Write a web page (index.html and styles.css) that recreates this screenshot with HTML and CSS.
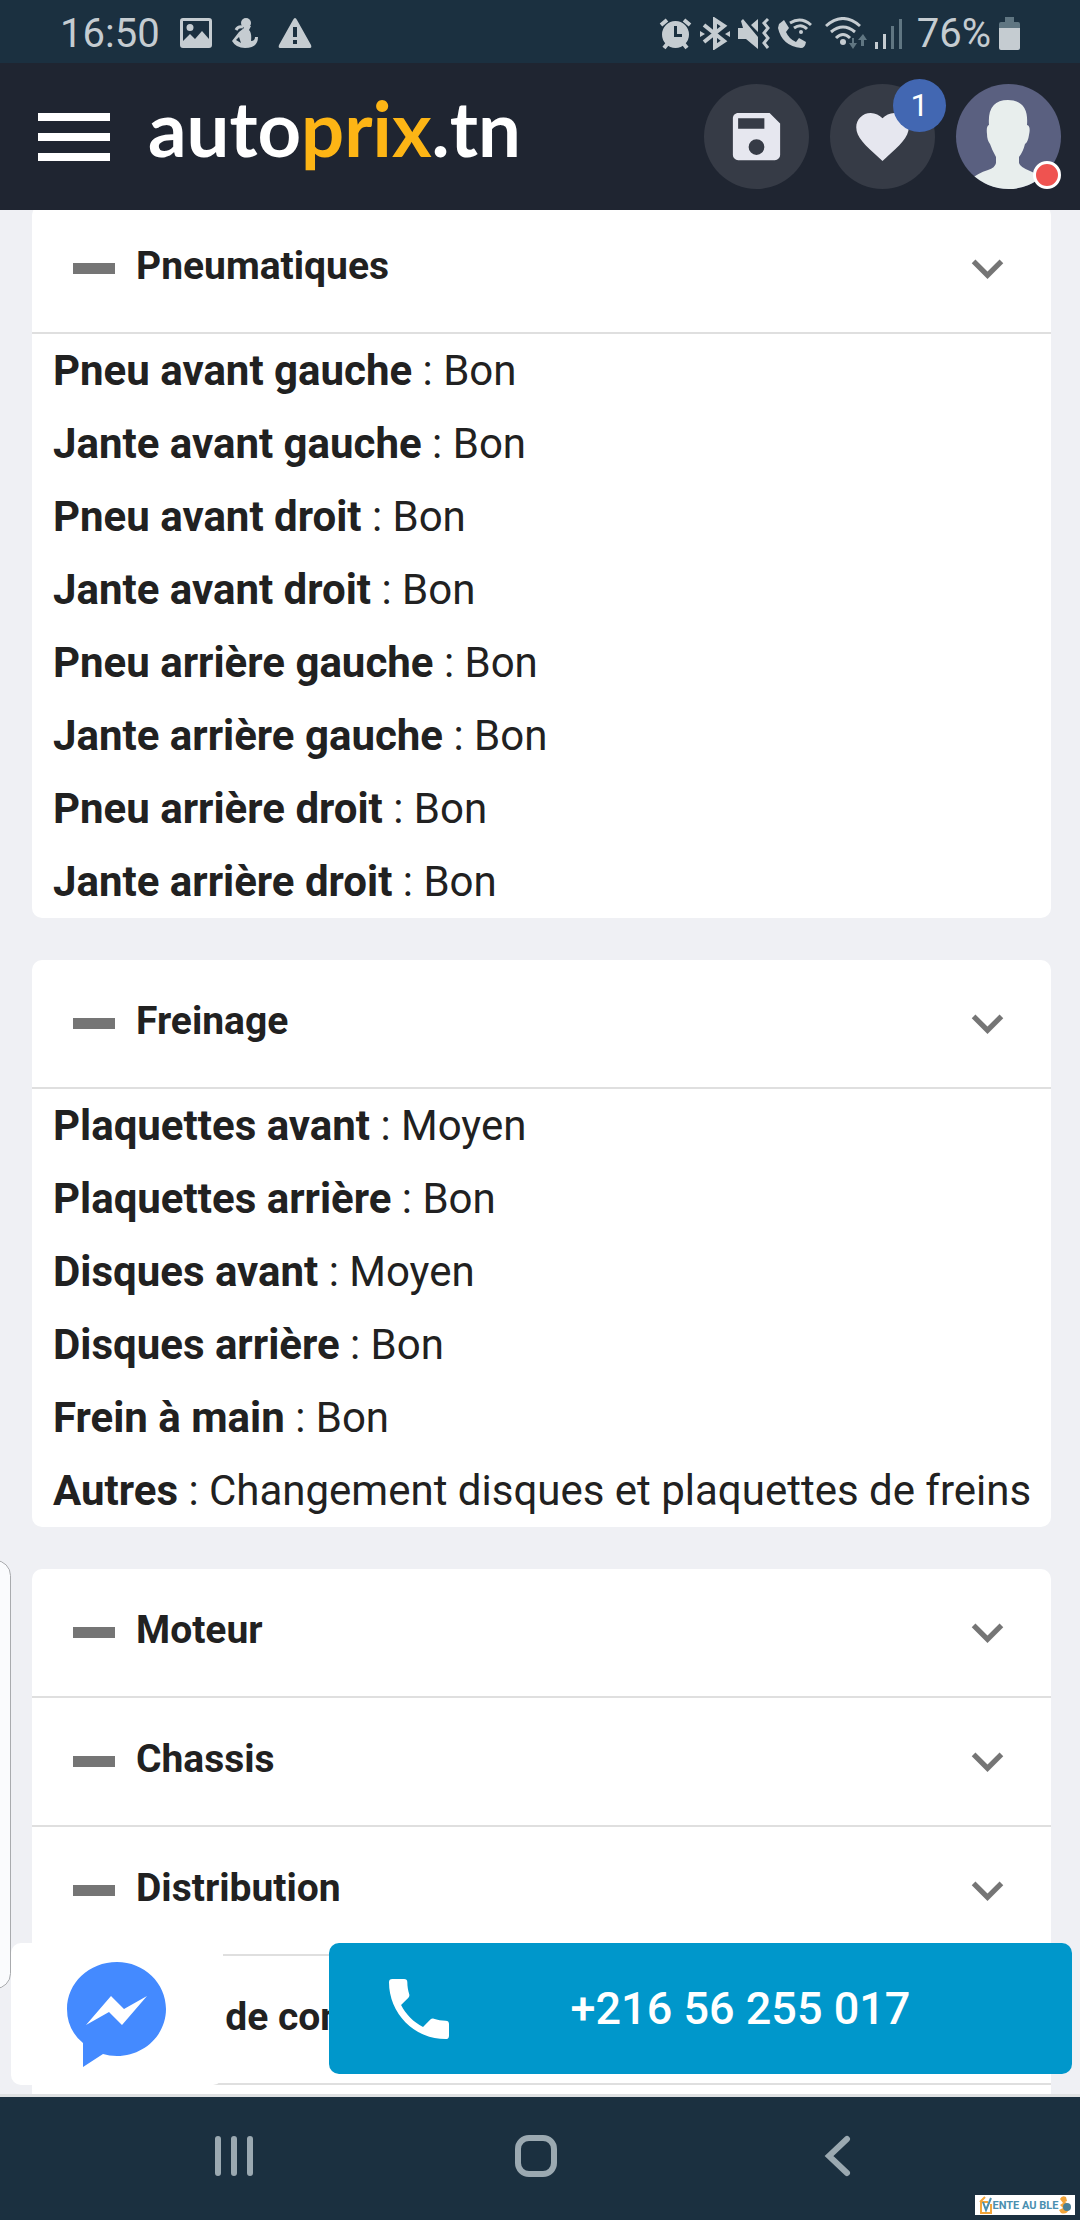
FILE: index.html
```html
<!DOCTYPE html>
<html lang="fr">
<head>
<meta charset="utf-8">
<meta name="viewport" content="width=device-width, initial-scale=1">
<title>autoprix.tn</title>
<link rel="stylesheet" href="styles.css">
</head>
<body>
<svg class="defs" aria-hidden="true">
  <symbol id="chevron" viewBox="0 0 24 24"><path d="M7.41 8.58 12 13.17l4.59-4.59L18 10l-6 6-6-6z"/></symbol>
</svg>

<div class="status">
  <div class="status-group status-left">
    <span class="clock">16:50</span>
    <svg class="s-photo" width="32" height="30" viewBox="0 0 32 30"><path fill-rule="evenodd" d="M3 0H29Q32 0 32 3V27Q32 30 29 30H3Q0 30 0 27V3Q0 0 3 0ZM3 3V23L10 16L15 21L22 13L29 21V3ZM10 6A3.500 3.500 0 1 1 10 13A3.500 3.500 0 1 1 10 6Z"/></svg>
    <svg class="s-figure" width="26" height="31" viewBox="0 0 26 31"><circle cx="14" cy="5" r="5"/><path d="M10 7 19 8 17 12Q20 15 19 23Q23 23 23 19H26Q26 30 13 30Q4 30 0 23L7 14 12 10ZM7 19 4 22 9 25Z" fill-rule="evenodd"/><path d="M4 12Q6 8 11 9" fill="none" stroke="currentColor" stroke-width="3"/></svg>
    <svg class="s-warn" width="34" height="30" viewBox="0 0 34 30"><path fill-rule="evenodd" d="M17 0Q18 0 19 2L33 27Q34 30 32 30H2Q0 30 1 27L15 2Q16 0 17 0ZM15 9V19H19V9ZM15 22V26H19V22Z"/></svg>
  </div>
  <div class="status-group status-right">
    <svg width="33" height="33" viewBox="0 0 33 33"><path fill-rule="evenodd" d="M16.500 4A13.500 13.500 0 1 1 16.500 31A13.500 13.500 0 1 1 16.500 4ZM15 9V20H23V17H18V9Z"/><path d="M2 8 8 3M25 3 31 8M9 26 5 31M24 26 28 31" stroke="currentColor" stroke-width="4" fill="none"/></svg>
    <svg width="30" height="33" viewBox="0 0 30 33"><path d="M4 8 24 24 15 30V3L24 9 4 25" fill="none" stroke="currentColor" stroke-width="4"/><path d="M0 14 5 17 0 20ZM30 14 25 17 30 20Z"/></svg>
    <svg width="32" height="33" viewBox="0 0 32 33"><path d="M0 11H5L3 4 5 2 20 20V32L8 22H0ZM13 8 20 2V15Z"/><path d="M30 2 26 6 30 11 26 16 30 21 26 26 30 31" fill="none" stroke="currentColor" stroke-width="3"/></svg>
    <svg width="34" height="33" viewBox="0 0 34 33"><path d="M1 7 6 3 11 11 8 15Q11 22 18 25L21 21 28 25Q27 31 23 31Q4 29 0 11Z"/><circle cx="23" cy="15" r="2"/><path d="M12 6Q23-1 33 8M16 11Q23 6 29 12" fill="none" stroke="currentColor" stroke-width="3"/></svg>
    <svg class="s-wifi" width="42" height="33" viewBox="0 0 42 33"><path d="M1 9Q18-6 35 9M6 15Q18 5 30 15M11 21Q18 14 25 21" fill="none" stroke="currentColor" stroke-width="3"/><circle cx="18" cy="25" r="3"/><path class="dim" d="M27 21V26H24L28 32 32 26H29V21ZM36 29V23H33L38 17 42 23H39V29Z"/></svg>
    <svg class="s-signal" width="27" height="31" viewBox="0 0 27 31"><path d="M0 24H3V31H0ZM8 16H11V31H8Z"/><path class="dim" d="M16 8H19V31H16ZM24 1H27V31H24Z"/></svg>
    <span class="percent">76%</span>
    <svg class="s-battery" width="21" height="33" viewBox="0 0 21 33"><path class="dim" d="M6 0H15V5H19Q21 5 21 7V12H0V7Q0 5 2 5H6Z"/><path d="M0 11H21V31Q21 33 19 33H2Q0 33 0 31Z"/></svg>
  </div>
</div>

<header class="topbar">
  <button class="menu" aria-label="Menu"><span></span><span></span><span></span></button>
  <a class="logo" href="#">auto<span>prix</span>.tn</a>
  <div class="actions">
    <button class="round" aria-label="Enregistrer"><svg width="63" height="63" viewBox="0 0 24 24"><path d="M15 9H5V5H15M12 19A3 3 0 0 1 9 16 3 3 0 0 1 12 13 3 3 0 0 1 15 16 3 3 0 0 1 12 19M17 3H5C3.890 3 3 3.900 3 5V19A2 2 0 0 0 5 21H19A2 2 0 0 0 21 19V7Z"/></svg></button>
    <button class="round" aria-label="Favoris"><svg width="63" height="63" viewBox="0 0 24 24"><path d="M12 21.350 10.550 20.030C5.400 15.360 2 12.270 2 8.500 2 5.410 4.420 3 7.500 3 9.240 3 10.910 3.810 12 5.080 13.090 3.810 14.760 3 16.500 3 19.580 3 22 5.410 22 8.500 22 12.270 18.600 15.360 13.450 20.030Z"/></svg><span class="count">1</span></button>
    <button class="round avatar" aria-label="Mon compte"><svg width="105" height="105" viewBox="0 0 105 105"><clipPath id="disc"><circle cx="52.500" cy="52.500" r="52.500"/></clipPath><path clip-path="url(#disc)" d="M33 41Q31 16 52 16Q73 16 71 41Q75 42 73 51Q72 58 69 60Q67 68 63 73V79Q64 83 74 87Q86 91 92 105H12L12 97Q22 89 32 86Q39 84 40 79V73Q36 66 34 60Q31 56 31 50Q30 42 33 41Z"/></svg><span class="presence"></span></button>
  </div>
</header>

<main class="content">
  <section class="card card-first">
    <button class="card-head"><span class="dash"></span><span class="title">Pneumatiques</span><svg class="chevron"><use href="#chevron"/></svg></button>
    <ul class="facts">
      <li><b>Pneu avant gauche</b> : Bon</li>
      <li><b>Jante avant gauche</b> : Bon</li>
      <li><b>Pneu avant droit</b> : Bon</li>
      <li><b>Jante avant droit</b> : Bon</li>
      <li><b>Pneu arrière gauche</b> : Bon</li>
      <li><b>Jante arrière gauche</b> : Bon</li>
      <li><b>Pneu arrière droit</b> : Bon</li>
      <li><b>Jante arrière droit</b> : Bon</li>
    </ul>
  </section>
  <section class="card">
    <button class="card-head"><span class="dash"></span><span class="title">Freinage</span><svg class="chevron"><use href="#chevron"/></svg></button>
    <ul class="facts">
      <li><b>Plaquettes avant</b> : Moyen</li>
      <li><b>Plaquettes arrière</b> : Bon</li>
      <li><b>Disques avant</b> : Moyen</li>
      <li><b>Disques arrière</b> : Bon</li>
      <li><b>Frein à main</b> : Bon</li>
      <li><b>Autres</b> : Changement disques et plaquettes de freins</li>
    </ul>
  </section>
  <section class="card card-last">
    <button class="card-head"><span class="dash"></span><span class="title">Moteur</span><svg class="chevron"><use href="#chevron"/></svg></button>
    <button class="card-head"><span class="dash"></span><span class="title">Chassis</span><svg class="chevron"><use href="#chevron"/></svg></button>
    <button class="card-head"><span class="dash"></span><span class="title">Distribution</span><svg class="chevron"><use href="#chevron"/></svg></button>
    <button class="card-head"><span class="dash"></span><span class="title">Aide de conduite</span><svg class="chevron"><use href="#chevron"/></svg></button>
  </section>

  <div class="edge-panel"></div>
  <div class="contact">
    <a class="messenger" href="#" aria-label="Messenger"><svg width="100" height="105" viewBox="0 0 100 105"><path class="bubble" d="M50 0C77 0 99 21 99 47S77 94 50 94Q42 94 36 92L16 105V81Q0 68 0 47C0 21 22 0 50 0Z"/><path class="bolt" d="M19 63 44 34 57 47 80 34 55 63 42 50Z"/></svg></a>
    <a class="call" href="tel:+21656255017"><svg width="80" height="80" viewBox="0 0 24 24"><path d="M6.620 10.790C8.060 13.620 10.380 15.940 13.210 17.380L15.410 15.180C15.690 14.900 16.080 14.820 16.430 14.930 17.550 15.300 18.750 15.500 20 15.500A1 1 0 0 1 21 16.500V20A1 1 0 0 1 20 21 17 17 0 0 1 3 4 1 1 0 0 1 4 3H7.500A1 1 0 0 1 8.500 4C8.500 5.250 8.700 6.450 9.070 7.570 9.180 7.920 9.100 8.310 8.820 8.590Z"/></svg><span>+216 56 255 017</span></a>
  </div>
</main>

<nav class="navbar" aria-label="Système">
  <button aria-label="Applications récentes"><svg width="42" height="42" viewBox="0 0 42 42"><path d="M5 4V38M21 4V38M37 4V38"/></svg></button>
  <button aria-label="Accueil"><svg width="42" height="42" viewBox="0 0 42 42"><rect x="3" y="3" width="36" height="36" rx="11"/></svg></button>
  <button aria-label="Retour"><svg width="42" height="42" viewBox="0 0 42 42"><path d="M30 4 12 21 30 38"/></svg></button>
  <div class="stamp"><svg width="14" height="20" viewBox="0 0 14 20"><path d="M1 7H9M2 7V18H12V9M1 7 6 2" fill="none" stroke="#f2a53a" stroke-width="2"/><path d="M4 7 7 15 12 3" fill="none" stroke="#4a8fb0" stroke-width="2"/></svg><span>ENTE AU BLE</span><svg width="13" height="20" viewBox="0 0 13 20"><path d="M2 4Q4 0 8 2L9 6 7 7Q12 9 11 14Q9 20 3 18L1 15 5 13 2 10 5 8Z" fill="#f2a53a"/><circle cx="9" cy="12" r="4" fill="#4a8098"/></svg></div>
</nav>
</body>
</html>
```
FILE: styles.css
```css
* { box-sizing: border-box; }

body {
  margin: 0;
  height: 100vh;
  display: flex;
  flex-direction: column;
  overflow: hidden;
  background: #eff0f4;
  color: #212121;
  font-family: Roboto, sans-serif;
}

button {
  margin: 0;
  padding: 0;
  border: 0;
  background: none;
  color: inherit;
  font: inherit;
}

a { color: inherit; text-decoration: none; }
svg { display: block; flex: none; fill: currentColor; }
.defs { position: absolute; width: 0; height: 0; }

/* Phone status bar */
.status {
  flex: none;
  display: flex;
  justify-content: space-between;
  height: 63px;
  padding: 3px 60px 0;
  background: #1b3040;
  color: #c5ccd1;
  font-size: 40px;
}
.status-group { display: flex; align-items: center; }
.status-left { gap: 20px; }
.status-right { gap: 8px; }
.percent { margin-left: 7px; }
.s-wifi { margin-left: 5px; }
.dim { fill: #607682; }

/* Site header */
.topbar {
  flex: none;
  position: relative;
  z-index: 1;
  display: flex;
  align-items: center;
  height: 147px;
  padding: 0 19px 0 38px;
  background: #1f2531;
  color: #fff;
}
.menu { display: flex; flex-direction: column; gap: 12px; width: 72px; }
.menu span { height: 8px; background: #fff; }
.logo {
  margin-left: 38px;
  padding-bottom: 18px;
  font: 700 76px/90px Lato, sans-serif;
}
.logo span { color: #fdb515; }
.actions { display: flex; gap: 21px; margin-left: auto; }
.round {
  position: relative;
  display: grid;
  place-items: center;
  width: 105px;
  height: 105px;
  border-radius: 50%;
  background: #363b46;
  color: #e6e7ef;
}
.count {
  position: absolute;
  top: -5px;
  right: -11px;
  width: 53px;
  height: 53px;
  border-radius: 50%;
  background: #4267b2;
  color: #fff;
  font-size: 32px;
  line-height: 53px;
  text-align: center;
}
.avatar { background: #5a6080; color: #e8eeed; }
.presence {
  position: absolute;
  right: 0;
  bottom: 0;
  width: 28px;
  height: 28px;
  border: 3px solid #fff;
  border-radius: 50%;
  background: #ef5350;
}

/* Inspection report */
.content {
  flex: 1;
  position: relative;
  display: flex;
  flex-direction: column;
  gap: 42px;
  min-height: 0;
  padding: 0 29px 0 32px;
  border-bottom: 3px solid #dfe1e2;
}
.card { flex: none; border-radius: 10px; background: #fff; }
.card-first { margin-top: -5px; }
.card-last { flex: 1; border-radius: 10px 10px 0 0; }
.card-head {
  display: flex;
  align-items: center;
  width: 100%;
  height: 129px;
  padding: 0 32px 0 41px;
  border-bottom: 2px solid #dfdfdf;
  text-align: left;
}
.dash { width: 42px; height: 11px; background: #757575; }
.title {
  flex: 1;
  margin-left: 21px;
  padding-bottom: 5px;
  font-size: 39px;
  font-weight: 700;
}
.chevron { width: 63px; height: 63px; color: #757575; }
.facts { margin: 0; padding: 0; list-style: none; }
.facts li {
  padding: 0 21px;
  font-size: 42px;
  line-height: 73px;
  white-space: nowrap;
}

/* Edge handle and contact buttons float over the report */
.edge-panel {
  position: absolute;
  left: -20px;
  bottom: 105px;
  width: 31px;
  height: 429px;
  border: 1px solid #a9abae;
  border-radius: 16px;
  background: #fafbfd;
}
.contact {
  position: absolute;
  right: 8px;
  bottom: 9px;
  left: 11px;
  display: flex;
  align-items: flex-start;
  gap: 106px;
}
.messenger {
  display: grid;
  place-items: center;
  width: 212px;
  height: 142px;
  border-radius: 10px;
  background: #fff;
}
.bubble { fill: #448aff; }
.bolt { fill: #fff; }
.call {
  flex: 1;
  display: flex;
  align-items: center;
  height: 131px;
  padding: 0 50px;
  border-radius: 10px;
  background: #0097cb;
  color: #fff;
  font-size: 45px;
  font-weight: 500;
}
.call span { flex: 1; text-align: center; }

/* Phone navigation bar */
.navbar {
  flex: none;
  position: relative;
  display: grid;
  grid-template-columns: repeat(3, 1fr);
  height: 123px;
  padding: 0 91px 5px 83px;
  background: #1b3040;
  color: #9ba9b1;
}
.navbar button { display: grid; place-items: center; }
.navbar button svg {
  fill: none;
  stroke: currentColor;
  stroke-width: 6;
  stroke-linecap: round;
}
.stamp {
  position: absolute;
  right: 5px;
  bottom: 5px;
  display: flex;
  align-items: center;
  justify-content: center;
  width: 100px;
  height: 20px;
  background: #fff;
  color: #4a8fb0;
  font-size: 11px;
  font-weight: 700;
  white-space: nowrap;
}
```
